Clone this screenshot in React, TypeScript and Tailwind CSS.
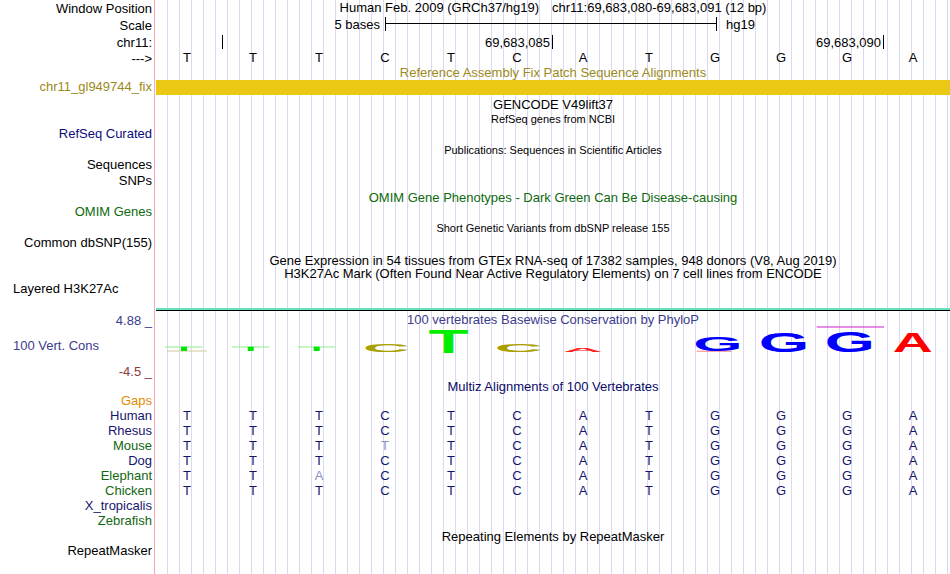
import React from "react";

const BASES = "TTTCTCATGGGA".split("");

type Row = { h: string; text?: string; cls?: string; left?: boolean };

// left label column, heights in px so the labels sit on the track rows
const LABELS: Row[] = [
  { h: "h-[16px]", text: "Window Position" },
  { h: "h-[18px]", text: "Scale" },
  { h: "h-[17px]", text: "chr11:" },
  { h: "h-[15px]", text: "--->" },
  { h: "h-[13px]" },
  { h: "h-[15px]", text: "chr11_gl949744_fix", cls: "text-[#9c8a20]" },
  { h: "h-[31px]" },
  { h: "h-[16px]", text: "RefSeq Curated", cls: "text-[#0c0c78]" },
  { h: "h-[16px]" },
  { h: "h-[15px]", text: "Sequences" },
  { h: "h-[16px]", text: "SNPs" },
  { h: "h-[15px]" },
  { h: "h-[17px]", text: "OMIM Genes", cls: "text-[#0c6a0c]" },
  { h: "h-[14px]" },
  { h: "h-[16px]", text: "Common dbSNP(155)" },
  { h: "h-[30px]" },
  { h: "h-[16px]", text: "Layered H3K27Ac", left: true },
  { h: "h-[16px]" },
  { h: "h-[16px]", text: "4.88 _", cls: "text-[#3c3c8c]" },
  { h: "h-[9px]" },
  { h: "h-[16px]", text: "100 Vert. Cons", cls: "text-[#3c3c8c]", left: true },
  { h: "h-[10px]" },
  { h: "h-[16px]", text: "-4.5 _", cls: "text-[#8c3c3c]" },
  { h: "h-[13px]" },
  { h: "h-[16px]", text: "Gaps", cls: "text-[#e68a00]" },
  { h: "h-[15px]", text: "Human", cls: "text-[#16166e]" },
  { h: "h-[15px]", text: "Rhesus", cls: "text-[#16166e]" },
  { h: "h-[15px]", text: "Mouse", cls: "text-[#116611]" },
  { h: "h-[15px]", text: "Dog", cls: "text-[#16166e]" },
  { h: "h-[15px]", text: "Elephant", cls: "text-[#116611]" },
  { h: "h-[15px]", text: "Chicken", cls: "text-[#116611]" },
  { h: "h-[15px]", text: "X_tropicalis", cls: "text-[#16166e]" },
  { h: "h-[15px]", text: "Zebrafish", cls: "text-[#116611]" },
  { h: "h-[14px]" },
  { h: "h-[16px]", text: "RepeatMasker" },
];

// species rows of the multiz track; light = base that differs
const ALIGN: { seq: string; light?: number }[] = [
  { seq: "TTTCTCATGGGA" },
  { seq: "TTTCTCATGGGA" },
  { seq: "TTTTTCATGGGA", light: 3 },
  { seq: "TTTCTCATGGGA" },
  { seq: "TTACTCATGGGA", light: 2 },
  { seq: "TTTCTCATGGGA" },
];

// ink metrics of Liberation Sans Bold at size 100: left bearing, ink width
const INK: Record<string, [number, number]> = {
  G: [4.4, 68.2],
  T: [2.2, 56.9],
  A: [0, 72.2],
  C: [4.6, 63.1],
};

function LogoLetter({ ch, x, w, top, bottom, fill }: { ch: string; x: number; w: number; top: number; bottom: number; fill: string }) {
  const [lsb, ink] = INK[ch];
  const sx = w / ink;
  const sy = (bottom - top) / 71.6;
  return (
    <g transform={`translate(${x - lsb * sx},${bottom}) scale(${sx},${sy})`}>
      <text x={0} y={0} fontSize={100} fontWeight="bold" fontFamily="Liberation Sans, Arial, sans-serif" fill={fill}>
        {ch}
      </text>
    </g>
  );
}

function ConsLogo() {
  return (
    <svg width={794} height={28} viewBox="0 0 794 28" className="block overflow-visible">
      {/* first three columns: almost flat */}
      <rect x={11} y={23.5} width={40} height={1} fill="#cfc79a" />
      {[9, 75.7, 141.7].map((x) => (
        <g key={x}>
          <rect x={x} y={19.5} width={37.5} height={1} fill="#8cf08c" />
          <rect x={x + 16} y={19.7} width={6} height={4.3} fill="#00e600" />
        </g>
      ))}
      <LogoLetter ch="C" x={210} w={40.7} top={17.3} bottom={24.7} fill="#aaa000" />
      <LogoLetter ch="T" x={274} w={37.3} top={2} bottom={25.7} fill="#00ee00" />
      <LogoLetter ch="C" x={341.7} w={41.6} top={17} bottom={25} fill="#aaa000" />
      <LogoLetter ch="A" x={406.7} w={40} top={21.3} bottom={24.7} fill="#ff2020" />
      <rect x={540.7} y={23.7} width={35} height={1} fill="#ff8080" />
      <LogoLetter ch="G" x={540} w={43.3} top={9.7} bottom={24.2} fill="#0000ff" />
      <LogoLetter ch="G" x={605.7} w={44.3} top={5.5} bottom={24.7} fill="#0000ff" />
      <rect x={660.7} y={-0.5} width={67.3} height={1} fill="#d020d0" />
      <LogoLetter ch="G" x={671.7} w={44} top={3.7} bottom={25} fill="#0000ff" />
      <LogoLetter ch="A" x={736.7} w={40} top={5.3} bottom={25} fill="#ff0000" />
    </svg>
  );
}

function CenterText({ h, cls, children }: { h: string; cls: string; children: React.ReactNode }) {
  return <div className={`${h} flex items-center justify-center whitespace-nowrap leading-none ${cls}`}>{children}</div>;
}

export default function App() {
  return (
    <div className="w-[950px] h-[574px] flex bg-white overflow-hidden text-black font-['Liberation_Sans',Arial,sans-serif] text-[13px]">
      {/* track labels */}
      <div className="w-[155px] shrink-0 border-r border-[#f5aaaa] flex flex-col">
        {LABELS.map((r, i) => (
          <div
            key={i}
            className={`${r.h} shrink-0 flex items-center whitespace-nowrap leading-none ${r.left ? "justify-start pl-[13px]" : "justify-end pr-[2px]"} ${r.cls ?? ""}`}
          >
            {r.text}
          </div>
        ))}
      </div>

      {/* track images */}
      <div className="flex-1 border-l border-white flex flex-col bg-[linear-gradient(to_right,transparent_11px,#dcd8f0_11px)] bg-[length:12px_100%]">
        <div className="h-[15px] flex items-center justify-center gap-[13px] whitespace-nowrap leading-none">
          <span>Human Feb. 2009 (GRCh37/hg19)</span>
          <span>chr11:69,683,080-69,683,091 (12 bp)</span>
        </div>

        {/* scale bar */}
        <div className="h-[18px] flex items-center leading-none">
          <div className="flex-1 flex justify-end pr-[5px]">5 bases</div>
          <div className="w-[332px] h-[14px] border-x border-black">
            <div className="h-px bg-black mt-[5.5px]" />
          </div>
          <div className="flex-1 pl-[9px]">hg19</div>
        </div>

        {/* chromosome position ticks */}
        <div className="h-[18px] flex items-start pt-[2px] leading-none">
          <div className="w-[66px]" />
          <div className="w-px h-[14px] bg-black" />
          <div className="w-[329px] h-[14px] flex items-center justify-end pr-[2px]">69,683,085</div>
          <div className="w-px h-[14px] bg-black" />
          <div className="w-[330px] h-[14px] flex items-center justify-end pr-[2px]">69,683,090</div>
          <div className="w-px h-[14px] bg-black" />
        </div>

        {/* bases */}
        <div className="h-[13px] -ml-[2px] grid grid-cols-[repeat(12,66px)] items-center leading-none">
          {BASES.map((b, i) => (
            <span key={i} className="text-center">{b}</span>
          ))}
        </div>

        <CenterText h="h-[16px]" cls="text-[#9c8a20]">Reference Assembly Fix Patch Sequence Alignments</CenterText>
        <div className="h-[15px] bg-[#e9c914]" />
        <CenterText h="h-[18px]" cls="">GENCODE V49lift37</CenterText>
        <CenterText h="h-[12px]" cls="text-[11px]">RefSeq genes from NCBI</CenterText>
        <div className="h-[18px]" />
        <CenterText h="h-[15px]" cls="text-[11px]">Publications: Sequences in Scientific Articles</CenterText>
        <div className="h-[32px]" />
        <CenterText h="h-[14px]" cls="text-[#0c6a0c]">OMIM Gene Phenotypes - Dark Green Can Be Disease-causing</CenterText>
        <div className="h-[17px]" />
        <CenterText h="h-[14px]" cls="text-[11px]">Short Genetic Variants from dbSNP release 155</CenterText>
        <div className="h-[18px]" />
        <CenterText h="h-[14px]" cls="">Gene Expression in 54 tissues from GTEx RNA-seq of 17382 samples, 948 donors (V8, Aug 2019)</CenterText>
        <CenterText h="h-[13px]" cls="">H3K27Ac Mark (Often Found Near Active Regulatory Elements) on 7 cell lines from ENCODE</CenterText>
        <div className="h-[28px]" />
        <div className="h-[2px] bg-[#66e0bf]" />
        <div className="h-px bg-black" />

        {/* conservation */}
        <div className="h-[16px] pt-[2px] leading-[14px] text-center whitespace-nowrap text-[#3c3c8c]">
          100 vertebrates Basewise Conservation by PhyloP
        </div>
        <ConsLogo />
        <div className="h-[23px]" />

        {/* multiz */}
        <CenterText h="h-[16px]" cls="text-[#0a0a66]">Multiz Alignments of 100 Vertebrates</CenterText>
        <div className="h-[14px]" />
        {ALIGN.map((row, r) => (
          <div key={r} className="h-[15px] -ml-[2px] grid grid-cols-[repeat(12,66px)] items-center leading-none">
            {row.seq.split("").map((b, i) => (
              <span key={i} className={`text-center ${row.light === i ? "text-[#8c8cc8]" : "text-[#14146e]"}`}>
                {b}
              </span>
            ))}
          </div>
        ))}
        <div className="h-[30px]" />
        <CenterText h="h-[16px]" cls="">Repeating Elements by RepeatMasker</CenterText>
      </div>
    </div>
  );
}
